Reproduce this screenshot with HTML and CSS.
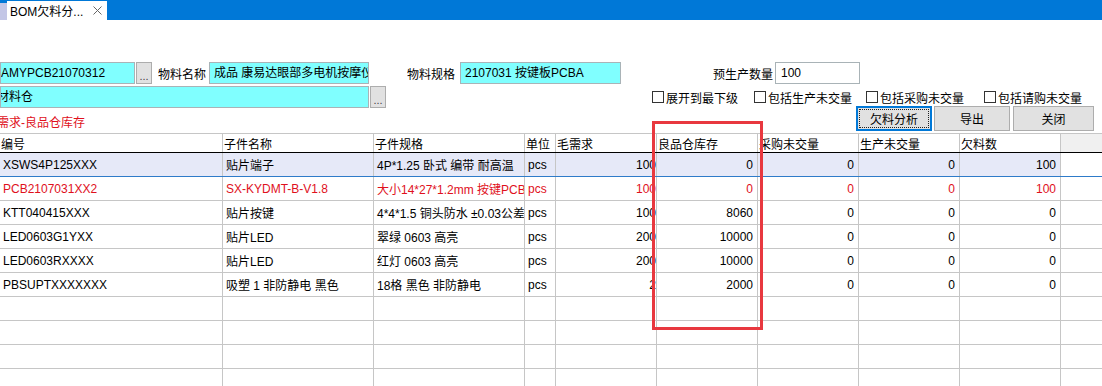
FILE: index.html
```html
<!DOCTYPE html>
<html lang="zh-CN">
<head>
    <meta charset="UTF-8" />
    <title>BOM欠料分析</title>
    <link rel="stylesheet" href="styles.css">
</head>
<body>
    <div class="titlebar">
        <div class="tab-stub"></div>
        <div class="tab">
            <span class="tab-title">BOM欠料分...</span>
            <svg class="tab-close" width="9" height="9" viewBox="0 0 9 9">
                <path d="M0.5 0.5 L8.5 8.5 M8.5 0.5 L0.5 8.5" stroke="#666" stroke-width="1" fill="none" />
            </svg>
        </div>
    </div>

    <div class="form">
        <!-- Material code / name / spec / quantity -->
        <div class="form-row">
            <div class="field cyan w-code">AMYPCB21070312</div>
            <button class="dots">...</button>
            <span class="label lbl-name">物料名称</span>
            <div class="field cyan w-name">成品 康易达眼部多电机按摩仪</div>
            <span class="label lbl-spec">物料规格</span>
            <div class="field cyan w-spec">2107031 按键板PCBA</div>
            <span class="label lbl-qty">预生产数量</span>
            <div class="field w-qty">100</div>
        </div>

        <!-- Warehouse and options -->
        <div class="form-row row-options">
            <div class="field cyan w-store">材料仓</div>
            <button class="dots">...</button>
            <div class="checks">
                <label class="check c1"><span class="box"></span>展开到最下级</label>
                <label class="check c2"><span class="box"></span>包括生产未交量</label>
                <label class="check c3"><span class="box"></span>包括采购未交量</label>
                <label class="check c4"><span class="box"></span>包括请购未交量</label>
            </div>
        </div>

        <!-- Caption and actions -->
        <div class="form-row row-actions">
            <span class="caption">需求-良品仓库存</span>
            <div class="actions">
                <button class="btn btn-primary">欠料分析</button>
                <button class="btn btn-export">导出</button>
                <button class="btn btn-close">关闭</button>
            </div>
        </div>
    </div>

    <div class="grid">
        <div class="grid-row head">
            <div class="cell">编号</div>
            <div class="cell">子件名称</div>
            <div class="cell">子件规格</div>
            <div class="cell">单位</div>
            <div class="cell">毛需求</div>
            <div class="cell">良品仓库存</div>
            <div class="cell">采购未交量</div>
            <div class="cell">生产未交量</div>
            <div class="cell">欠料数</div>
            <div class="cell filler"></div>
        </div>

        <div class="grid-row selected">
            <div class="cell">XSWS4P125XXX</div>
            <div class="cell">贴片端子</div>
            <div class="cell">4P*1.25 卧式 编带 耐高温</div>
            <div class="cell">pcs</div>
            <div class="cell num gross">100</div>
            <div class="cell num">0</div>
            <div class="cell num">0</div>
            <div class="cell num">0</div>
            <div class="cell num">100</div>
            <div class="cell filler"></div>
        </div>

        <div class="grid-row short">
            <div class="cell">PCB2107031XX2</div>
            <div class="cell">SX-KYDMT-B-V1.8</div>
            <div class="cell">大小14*27*1.2mm 按键PCBA</div>
            <div class="cell">pcs</div>
            <div class="cell num gross">100</div>
            <div class="cell num">0</div>
            <div class="cell num">0</div>
            <div class="cell num">0</div>
            <div class="cell num">100</div>
            <div class="cell filler"></div>
        </div>

        <div class="grid-row">
            <div class="cell">KTT040415XXX</div>
            <div class="cell">贴片按键</div>
            <div class="cell">4*4*1.5 铜头防水 ±0.03公差</div>
            <div class="cell">pcs</div>
            <div class="cell num gross">100</div>
            <div class="cell num">8060</div>
            <div class="cell num">0</div>
            <div class="cell num">0</div>
            <div class="cell num">0</div>
            <div class="cell filler"></div>
        </div>

        <div class="grid-row">
            <div class="cell">LED0603G1YXX</div>
            <div class="cell">贴片LED</div>
            <div class="cell">翠绿 0603 高亮</div>
            <div class="cell">pcs</div>
            <div class="cell num gross">200</div>
            <div class="cell num">10000</div>
            <div class="cell num">0</div>
            <div class="cell num">0</div>
            <div class="cell num">0</div>
            <div class="cell filler"></div>
        </div>

        <div class="grid-row">
            <div class="cell">LED0603RXXXX</div>
            <div class="cell">贴片LED</div>
            <div class="cell">红灯 0603 高亮</div>
            <div class="cell">pcs</div>
            <div class="cell num gross">200</div>
            <div class="cell num">10000</div>
            <div class="cell num">0</div>
            <div class="cell num">0</div>
            <div class="cell num">0</div>
            <div class="cell filler"></div>
        </div>

        <div class="grid-row">
            <div class="cell">PBSUPTXXXXXXX</div>
            <div class="cell">吸塑 1 非防静电 黑色</div>
            <div class="cell">18格 黑色 非防静电</div>
            <div class="cell">pcs</div>
            <div class="cell num gross">2</div>
            <div class="cell num">2000</div>
            <div class="cell num">0</div>
            <div class="cell num">0</div>
            <div class="cell num">0</div>
            <div class="cell filler"></div>
        </div>

        <div class="grid-row empty"><div class="cell"></div><div class="cell"></div><div class="cell"></div><div class="cell"></div><div class="cell"></div><div class="cell"></div><div class="cell"></div><div class="cell"></div><div class="cell"></div><div class="cell filler"></div></div>
        <div class="grid-row empty"><div class="cell"></div><div class="cell"></div><div class="cell"></div><div class="cell"></div><div class="cell"></div><div class="cell"></div><div class="cell"></div><div class="cell"></div><div class="cell"></div><div class="cell filler"></div></div>
        <div class="grid-row empty"><div class="cell"></div><div class="cell"></div><div class="cell"></div><div class="cell"></div><div class="cell"></div><div class="cell"></div><div class="cell"></div><div class="cell"></div><div class="cell"></div><div class="cell filler"></div></div>
        <div class="grid-row empty"><div class="cell"></div><div class="cell"></div><div class="cell"></div><div class="cell"></div><div class="cell"></div><div class="cell"></div><div class="cell"></div><div class="cell"></div><div class="cell"></div><div class="cell filler"></div></div>
    </div>

    <!-- Annotation around the stock column -->
    <div class="highlight"></div>
</body>
</html>
```

FILE: styles.css
```css
body {
    margin: 0;
    font-family: "Liberation Sans", "Noto Sans CJK SC", sans-serif;
    font-size: 12px;
    color: #000;
    background-color: #fff;
    position: relative;
    height: 386px;
    overflow: hidden;
}

/* Title bar with the document tab */
.titlebar {
    height: 20px;
    background-color: #0078d7;
    display: flex;
    align-items: flex-end;
}

.tab-stub {
    width: 7px;
    height: 17px;
    background-color: #c3c6e6;
}

.tab {
    width: 100px;
    height: 19px;
    background-color: #fff;
    display: flex;
    align-items: center;
    box-sizing: border-box;
    padding-left: 3px;
}

.tab-title {
    flex: 1;
    white-space: nowrap;
}

.tab-close {
    margin-right: 5px;
}

/* Search form */
.form {
    padding-top: 42px;
}

.form-row {
    display: flex;
    align-items: center;
    height: 22px;
}

.form-row > * {
    flex-shrink: 0;
}

.field {
    height: 22px;
    box-sizing: border-box;
    border: 1px solid #a9b3b7;
    background-color: #fff;
    padding-left: 4px;
    line-height: 20px;
    white-space: nowrap;
    overflow: hidden;
}

.field.cyan {
    background-color: #80ffff;
}

.w-code { width: 135px; padding-left: 0; }
.w-name { width: 160px; margin-left: 2px; }
.w-spec { width: 161px; margin-left: 4px; }
.w-qty { width: 85px; margin-left: 2px; padding-left: 5px; }
.w-store { width: 369px; padding-left: 0; text-indent: -4px; }

.dots {
    width: 16px;
    height: 22px;
    margin: 0 0 0 1px;
    padding: 0;
    border: 1px solid #adadad;
    background-color: #e1e1e1;
    font-family: inherit;
    font-size: 11px;
    color: #444;
    line-height: 26px;
    box-sizing: border-box;
}

.label {
    display: inline-block;
    white-space: nowrap;
    overflow: hidden;
}

.lbl-name { margin-left: 6px; width: 49px; }
.lbl-spec { margin-left: 38px; width: 49px; }
.lbl-qty { margin-left: 91px; width: 61px; text-align: right; }

.row-options {
    margin-top: 2px;
}

.checks {
    display: flex;
    margin-left: 266px;
    align-items: center;
}

.check {
    display: flex;
    align-items: center;
    white-space: nowrap;
}

.check .box {
    width: 12px;
    height: 12px;
    box-sizing: border-box;
    border: 1px solid #333;
    background-color: #fff;
    margin-right: 2px;
}

.c1 { width: 102px; }
.c2 { width: 112px; }
.c3 { width: 118px; }

.row-actions {
    margin-top: -2px;
    height: 25px;
}

.caption {
    color: #e0101c;
    padding-top: 5px;
    text-indent: -3px;
}

.actions {
    margin-left: auto;
    margin-right: 8px;
    display: flex;
    gap: 2px;
}

.btn {
    height: 25px;
    margin: 0;
    border: 1px solid #adadad;
    background-color: #e1e1e1;
    font-family: inherit;
    font-size: 12px;
    color: #000;
    padding: 0;
}

.btn-primary {
    width: 76px;
    border-color: #0078d7;
    box-shadow: inset 0 0 0 1px #0078d7;
    outline: 1px dotted #222;
    outline-offset: -4px;
}

.btn-export { width: 76px; }
.btn-close { width: 81px; margin-left: 1px; }

/* Result grid */
.grid {
    margin-top: 2px;
}

.grid-row {
    display: grid;
    grid-template-columns: 223px 151px 151px 31px 101px 101px 101px 101px 101px 1fr;
    height: 24px;
    box-sizing: border-box;
    border-bottom: 1px solid #c6c6c6;
}

.cell {
    border-right: 1px solid #c6c6c6;
    padding: 0 3px;
    display: flex;
    align-items: center;
    white-space: nowrap;
    overflow: hidden;
}

.cell:first-child {
    padding-left: 3px;
}

.cell.num {
    justify-content: flex-end;
    padding-right: 4px;
}

.cell.gross {
    padding-right: 0;
}

.cell.filler {
    border-right: none;
}

.grid-row.head {
    height: 20px;
    border-top: 1px solid #c6c6c6;
    border-bottom: 1px solid #000;
}

.grid-row.head .cell {
    padding-left: 1px;
}

.grid-row.head .filler {
    background-color: #f0f0f0;
}

.grid-row.selected {
    border-bottom-color: #2e7bc9;
}

.grid-row.selected .cell {
    background-color: #e6e9f8;
}

.grid-row.selected .filler {
    background-color: #fff;
}

.grid-row.short {
    color: #e0101c;
}

/* Red annotation box */
.highlight {
    position: absolute;
    left: 652px;
    top: 121px;
    width: 111px;
    height: 209px;
    box-sizing: border-box;
    border: 3px solid #e8383f;
}
```
